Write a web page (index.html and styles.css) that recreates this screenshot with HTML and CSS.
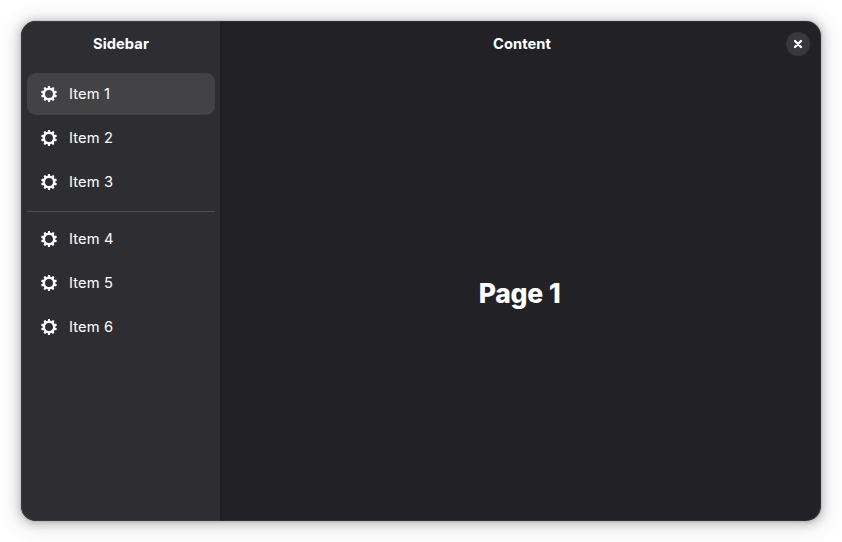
FILE: index.html
```html
<!DOCTYPE html>
<html lang="en">
<head>
<meta charset="utf-8">
<title>Sidebar</title>
<link rel="stylesheet" href="styles.css">
</head>
<body>
<svg width="0" height="0" class="defs" aria-hidden="true">
  <symbol id="gear" viewBox="0 0 16 16">
    <circle cx="8" cy="8" r="5.1" fill="none" stroke="currentColor" stroke-width="2.3"/>
    <g fill="currentColor">
      <path id="teeth" d="M7.1 0h1.8l.7 2.8h-3.2zM7.1 16h1.8l.7-2.8h-3.2z"/>
      <use href="#teeth" transform="rotate(36 8 8)"/>
      <use href="#teeth" transform="rotate(72 8 8)"/>
      <use href="#teeth" transform="rotate(108 8 8)"/>
      <use href="#teeth" transform="rotate(144 8 8)"/>
    </g>
  </symbol>
</svg>
<div class="window">
  <aside class="sidebar">
    <header class="headerbar"><h1 class="title">Sidebar</h1></header>
    <nav class="list">
      <a class="row selected"><svg class="icon"><use href="#gear"/></svg>Item 1</a>
      <a class="row"><svg class="icon"><use href="#gear"/></svg>Item 2</a>
      <a class="row"><svg class="icon"><use href="#gear"/></svg>Item 3</a>
      <hr class="separator">
      <a class="row"><svg class="icon"><use href="#gear"/></svg>Item 4</a>
      <a class="row"><svg class="icon"><use href="#gear"/></svg>Item 5</a>
      <a class="row"><svg class="icon"><use href="#gear"/></svg>Item 6</a>
    </nav>
  </aside>
  <main class="content">
    <header class="headerbar">
      <span></span>
      <h1 class="title">Content</h1>
      <button class="close" aria-label="Close"><svg width="16" height="16" viewBox="0 0 16 16"><path d="M5 5l6 6M11 5l-6 6" stroke="currentColor" stroke-width="2.3" stroke-linecap="round"/></svg></button>
    </header>
    <div class="page"><h2 class="page-title">Page 1</h2></div>
  </main>
</div>
</body>
</html>
```

FILE: styles.css
```css
* { box-sizing: border-box; }
body {
  margin: 0;
  padding: 21px;
  height: 542px;
  background: #fff;
  color: #fff;
  font: 14.667px Inter, "Liberation Sans", sans-serif;
  overflow: hidden;
}
.defs { position: absolute; }
.window {
  display: flex;
  width: 800px;
  height: 500px;
  border-radius: 15px;
  overflow: hidden;
  background: #222226;
  box-shadow: 0 1px 4px 0 rgba(0,0,0,.12), 0 1px 10px 3px rgba(0,0,0,.16), 0 3px 20px 8px rgba(0,0,0,.07), 0 0 0 1px rgba(0,0,0,.05);
  position: relative;
}
.window::after {
  content: "";
  position: absolute;
  inset: 0;
  border-radius: inherit;
  box-shadow: inset 0 0 0 1px rgba(255,255,255,.07);
  pointer-events: none;
}
.sidebar { width: 199px; background: #2e2e32; }
.content { flex: 1; display: flex; flex-direction: column; box-shadow: inset 1px 0 #1f1f23; }
.headerbar {
  height: 46px;
  display: grid;
  grid-template-columns: 1fr auto 1fr;
  align-items: center;
}
.sidebar .headerbar { grid-template-columns: 1fr; text-align: center; padding-left: 1px; }
.content .headerbar { padding-left: 3px; }
.title { margin: 0; font-size: 14.667px; font-weight: 700; letter-spacing: .08px; }
.close {
  justify-self: end;
  width: 24px;
  height: 24px;
  margin-right: 11px;
  padding: 4px;
  border: 0;
  border-radius: 50%;
  background: #38383c;
  color: #fff;
}
.close svg { display: block; }
.list { padding: 6px 5px 0 6px; display: flex; flex-direction: column; gap: 2px; }
.row {
  height: 42px;
  display: flex;
  align-items: center;
  gap: 12px;
  padding: 0 14px;
  border-radius: 9px;
  letter-spacing: .15px;
}
.selected { background: #434346; }
.icon { width: 16px; height: 16px; }
.separator { width: 100%; height: 1px; margin: 6px 0 4px; border: 0; background: #4d4d50; }
.page { flex: 1; display: flex; align-items: center; justify-content: center; padding: 0 2px 2px 0; }
.page-title { margin: 0; font-size: 26.5px; font-weight: 800; letter-spacing: -.25px; word-spacing: .5px; }
```
